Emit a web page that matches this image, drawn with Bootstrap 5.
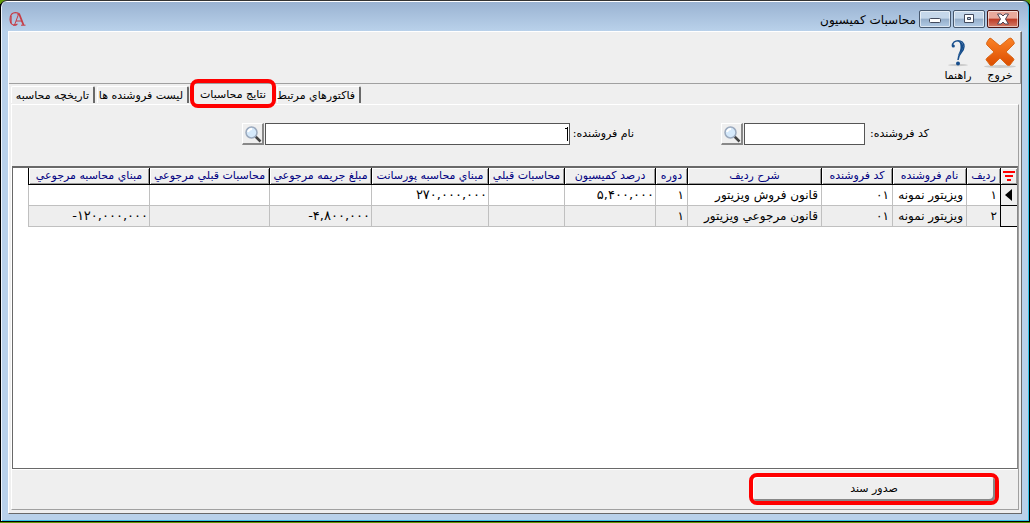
<!DOCTYPE html>
<html lang="fa" dir="rtl">
<head>
<meta charset="utf-8">
<meta name="viewport" content="width=device-width, initial-scale=1">
<title>محاسبات کمیسیون</title>
<link rel="stylesheet" href="https://cdn.jsdelivr.net/npm/bootstrap@5.3.0/dist/css/bootstrap.min.css">
<style>
:root{--face:#efefef;--dark:#696969;--mid:#a0a0a0}
body{font:11px/14px "DejaVu Sans",sans-serif;color:#000;background:linear-gradient(#5f9a08 0 4px,#000 4px calc(100% - 4px),#a9c431 0);overflow:hidden}
.win{height:calc(100vh - 1px);border:1px solid #000;border-top-color:#333;border-bottom-width:1px;border-radius:7px 7px 0 0;background:linear-gradient(#fff 0 1px,#9ab3d2 1px,#b9d1ea 30px);box-shadow:inset 1px 0 #eef4fb,inset -1px 0 #35c3e8,inset 0 -1px #35c3e8;padding:1px 7px 7px}
.titlebar{height:29px;padding:8px 3px 0 1px}
.titlebar h1{font-size:12px;line-height:18px;margin:1px 3px 0 0}
.brand{width:17px;height:17px;margin-top:1px}
.wbtns{gap:2px}
.wbtn{width:32px;height:18px;padding:0;border:1px solid #47586e;border-radius:2px;background:linear-gradient(#c5d7ea 0 45%,#94adc9 50%,#b2cbe5);box-shadow:inset 0 0 0 1px #ffffff90;line-height:0}
.wbtn svg{display:block;margin:auto}
.wbtn.close-win{border-color:#4b1311;background:linear-gradient(#e9a99c 0 45%,#bd3a25 50%,#d37b68)}
.client{background:var(--face);border:1px solid #fff;border-right-color:var(--dark);border-bottom-color:var(--dark);min-height:0}
.tools{height:52px;border-bottom:1px solid var(--mid);border-right:1px solid var(--mid);padding-top:5px;gap:4px;padding-right:1px}
.tool{border:0;background:none;padding:0;width:38px;line-height:14px;color:#000}
.tool svg{display:block;margin:0 auto}
.tabstrip{padding:2px 0 0 2px;height:19px;direction:ltr}
.tabstrip .tab{position:relative;border:1px solid #fff;border-bottom:0;border-right:2px solid var(--dark);border-radius:2px 2px 0 0;background:var(--face);padding:2px 4px 0;margin-right:2px;height:17px;line-height:14px;width:84px;color:#000;white-space:nowrap;direction:rtl}
.tabstrip .tab.wide{width:92px}
.tabstrip .tab.active{line-height:12px;height:18px;border:0;padding-top:0}
.tabstrip .tab.active::after{content:"";position:absolute;inset:-7px -1px -4px -1px;border:4px solid red;border-radius:8px}
.page{border:1px solid #fff;border-right-color:var(--mid);border-bottom-color:var(--mid);margin:1px 2px 3px 2px;min-height:0}
.filters{height:61px;padding:17px 89px 0 0;gap:87px}
.fgroup{height:24px;min-width:0}
.fgroup label{width:62px;white-space:nowrap;margin-left:2px}
.box{height:22px;width:121px;border:1px solid #555;border-radius:0;padding:0 3px;background:#fff;min-width:0}
.box.long{width:305px;flex:0 1 auto;background:linear-gradient(#000,#000) calc(100% - 1px) 3px/1px 14px no-repeat,linear-gradient(#000,#000) calc(100% - 2px) 4px/2px 1px no-repeat,#fff}
.look{width:22px;height:22px;padding:0;background:var(--face);border:1px solid #fff;border-right:2px solid #888;border-bottom:2px solid #888;margin-right:1px}
.look svg{display:block;margin:auto}
.gridbox{background:#fff;border:1px solid var(--dark);border-top:2px solid var(--dark);border-right-color:#888;min-height:0;overflow:hidden}
.grid{table-layout:fixed;width:100%;border-collapse:separate;border-spacing:0;white-space:nowrap}
.grid th{height:17px;padding:0 1px;font-weight:400;text-align:center;color:#000080;background:var(--face);border-left:1px solid #000;border-bottom:1px solid #000;box-shadow:inset 1px 1px #fff,inset -1px -1px #999;line-height:14px;overflow:hidden}
.grid td{height:21px;padding:0 3px;font-size:12px;line-height:18px;border-left:1px solid silver;border-bottom:1px solid silver;overflow:hidden}
.grid tr:nth-child(even) td{background:#eee}
.grid td.mk{background:var(--face)!important;border-color:#000;padding:0 1px}
.grid .void{border:0!important;background:#fff!important;box-shadow:none!important}
.grid td.num{direction:ltr;text-align:right;font-size:13px;padding:0 1px}
.foot{height:40px;padding:3px 19px 0;border-top:1px solid #fff}
.issue{width:250px;height:32px;border:4px solid red;border-radius:8px;background:var(--face);padding:0;box-shadow:inset 1px 1px #fff,inset -2px -2px #888;color:#000}
</style>
</head>
<body>
<main class="win d-flex flex-column">
  <header class="titlebar d-flex align-items-start justify-content-between">
    <div class="d-flex align-items-start">
      <div class="wbtns d-flex">
        <button class="wbtn close-win" aria-label="بستن"><svg width="14" height="12" viewBox="0 0 14 12"><path d="M1.500 1h3.500l2 2 2-2h3.500L9.500 6l3 5H9L7 9l-2 2H1.500l3-5z" fill="#fff" stroke="#4d4556"/></svg></button>
        <button class="wbtn" aria-label="بزرگ کردن"><svg width="12" height="10" viewBox="0 0 12 10"><path fill-rule="evenodd" d="M1.500.5h9v8h-9zM4.500 3.500v2h3v-2z" fill="#fff" stroke="#424a5d"/></svg></button>
        <button class="wbtn" aria-label="کوچک کردن"><svg width="12" height="10" viewBox="0 0 12 10"><rect x=".5" y="4.500" width="11" height="4" rx="1" fill="#fff" stroke="#424a5d"/></svg></button>
      </div>
      <h1 class="fw-normal">محاسبات کمیسیون</h1>
    </div>
    <svg class="brand" viewBox="0 0 17 17" fill="none" stroke="#c63c45"><path d="M9 4V2C3 .5 1 4 1 8.500 1 13 4 15.500 8.500 13" stroke-width="1.100"/><path d="M2 5v7" stroke-width="1.300"/><path d="M10 2.500 14.500 14" stroke-width="1.800"/><path d="M10 2 5.500 14M7 10h6M4 14.200h3.500M12 14.200h4.500"/></svg>
  </header>

  <section class="client d-flex flex-column flex-grow-1">
    <nav class="tools d-flex align-items-start">
      <button class="tool"><svg width="32" height="32" viewBox="0 0 32 32"><defs><linearGradient id="o" x2="0" y2="1"><stop stop-color="#fb8226"/><stop offset="1" stop-color="#dc4d00"/></linearGradient></defs><ellipse cx="16" cy="29.500" rx="16" ry="1.500" fill="#ccc"/><path d="M7 1.500 16 9l9-7.500q2-1 3 .5l2 3q1 2-1 3l-7 7 7 6q2 2 0 3l-3 4q-1 1-3 0l-7-7-7 7q-2 1-3 0l-3-4q-2-1 0-3l7-6-7-7q-1-1 0-3l2-3q1-1.500 2-.5z" fill="url(#o)" stroke="#d9691b"/></svg>خروج</button>
      <button class="tool"><svg width="32" height="32" viewBox="0 0 32 32"><ellipse cx="16" cy="28" rx="10" ry="1.200" fill="#ccc"/><path d="M10.500 9C10 2 22 1.500 22 9.500c0 6-6 6-6 13.500" fill="none" stroke="#174e8c" stroke-width="1.500"/><path d="M17.500 4c6 3 4 9 0 13-2 2-2 3-2 5 0-5 3-7 3-12 0-3-.5-5-3-6z" fill="#174e8c"/><circle cx="11.300" cy="9" r="1.600" fill="#174e8c"/><circle cx="16" cy="26.500" r="2" fill="#174e8c"/></svg>راهنما</button>
    </nav>

    <div class="tabstrip d-flex align-items-start">
      <button class="tab">تاریخچه محاسبه</button>
      <button class="tab wide">لیست فروشنده ها</button>
      <button class="tab active">نتایج محاسبات</button>
      <button class="tab">فاکتورهاي مرتبط</button>
    </div>

    <div class="page d-flex flex-column flex-grow-1">
      <form class="filters d-flex align-items-start">
        <div class="fgroup d-flex align-items-center"><label for="code">کد فروشنده:</label><input id="code" class="box"><button type="button" class="look" aria-label="جستجوی کد"><svg width="18" height="18" viewBox="0 0 18 18"><path d="m11.500 11.500 5 5" stroke="#444" stroke-width="2.500"/><circle cx="7.500" cy="7.500" r="5.500" fill="#d5e9fb" stroke="#9ba9bd" stroke-width="1.500"/><path d="M4 7q1-3 4-3" stroke="#fff" stroke-width="2" fill="none"/></svg></button></div>
        <div class="fgroup d-flex align-items-center"><label for="name">نام فروشنده:</label><input id="name" class="box long"><button type="button" class="look" aria-label="جستجوی نام"><svg width="18" height="18" viewBox="0 0 18 18"><path d="m11.500 11.500 5 5" stroke="#444" stroke-width="2.500"/><circle cx="7.500" cy="7.500" r="5.500" fill="#d5e9fb" stroke="#9ba9bd" stroke-width="1.500"/><path d="M4 7q1-3 4-3" stroke="#fff" stroke-width="2" fill="none"/></svg></button></div>
      </form>

      <div class="gridbox flex-grow-1">
        <table class="grid">
          <colgroup><col style="width:17px"><col style="width:34px"><col style="width:74px"><col style="width:71px"><col style="width:134px"><col style="width:32px"><col style="width:91px"><col style="width:76px"><col style="width:117px"><col style="width:102px"><col style="width:120px"><col style="width:121px"><col></colgroup>
          <thead><tr><th><svg width="12" height="10" viewBox="0 0 12 10" class="d-block mx-auto" fill="red"><path d="M0 0h12v2H0zM2 4h8v2H2zM4 8h4v2H4z"/></svg></th><th>ردیف</th><th>نام فروشنده</th><th>کد فروشنده</th><th>شرح ردیف</th><th>دوره</th><th>درصد کمیسیون</th><th>محاسبات قبلي</th><th>مبناي محاسبه پورسانت</th><th>مبلغ جریمه مرجوعي</th><th>محاسبات قبلي مرجوعي</th><th>مبناي محاسبه مرجوعي</th><th class="void"></th></tr></thead>
          <tbody>
            <tr><td class="mk"><svg width="7" height="12" viewBox="0 0 7 12" class="d-block ms-auto me-1"><path d="M7 0v12L0 6z"/></svg></td><td>۱</td><td>ویزیتور نمونه</td><td>۰۱</td><td>قانون فروش ویزیتور</td><td>۱</td><td class="num">۵,۴۰۰,۰۰۰</td><td></td><td class="num">۲۷۰,۰۰۰,۰۰۰</td><td></td><td></td><td></td><td class="void"></td></tr>
            <tr><td class="mk"></td><td>۲</td><td>ویزیتور نمونه</td><td>۰۱</td><td>قانون مرجوعي ویزیتور</td><td>۱</td><td></td><td></td><td></td><td class="num">-۴,۸۰۰,۰۰۰</td><td></td><td class="num">-۱۲۰,۰۰۰,۰۰۰</td><td class="void"></td></tr>
          </tbody>
        </table>
      </div>
      <footer class="foot d-flex align-items-start"><button class="issue">صدور سند</button></footer>
    </div>
  </section>
</main>
<script src="https://cdn.jsdelivr.net/npm/bootstrap@5.3.0/dist/js/bootstrap.bundle.min.js"></script>
</body>
</html>
